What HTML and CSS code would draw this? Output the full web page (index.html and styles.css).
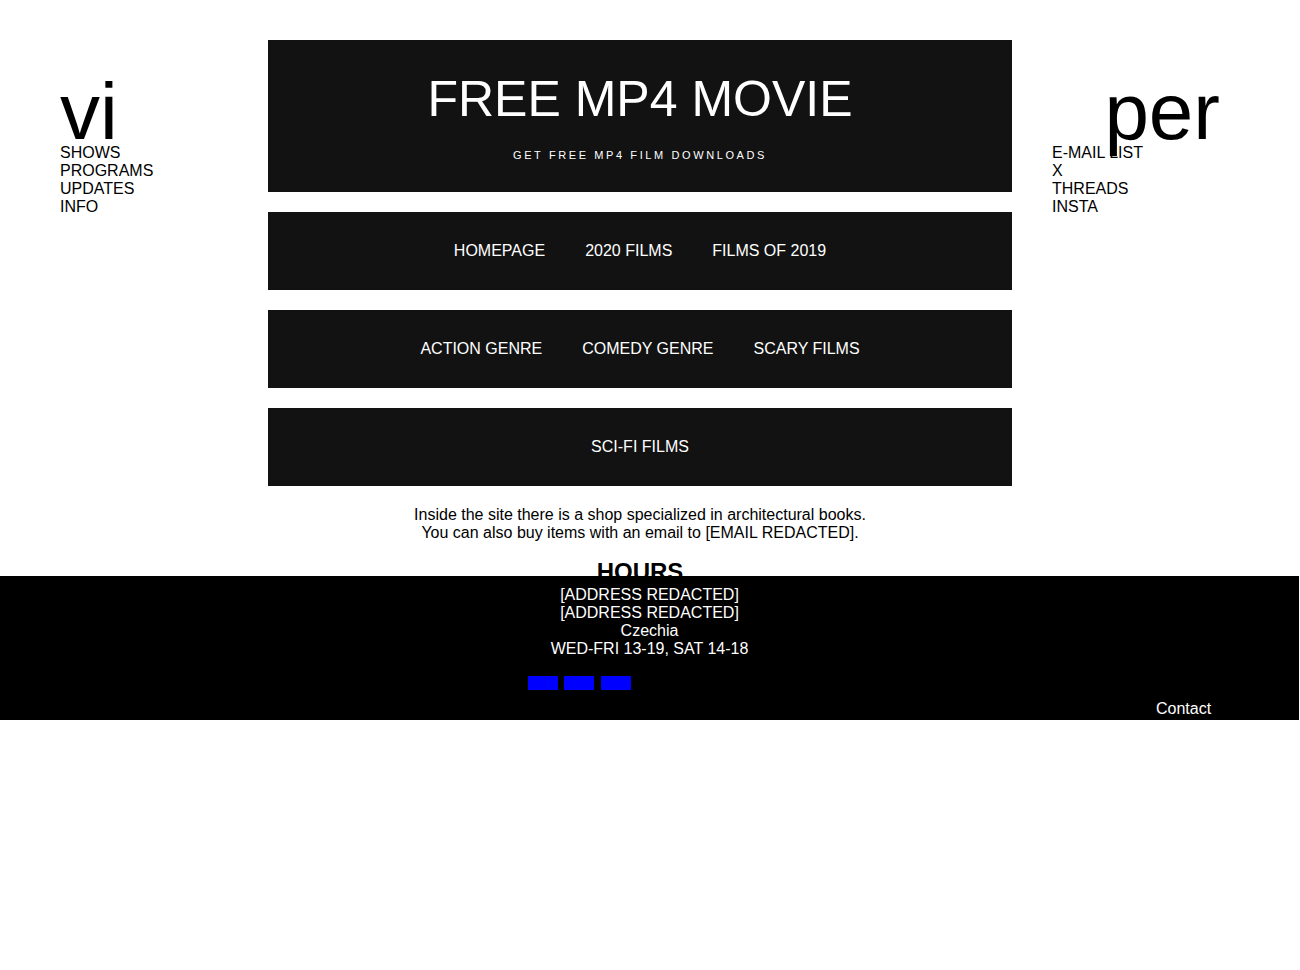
FILE: index.html
```html
<!DOCTYPE html>
<html lang="en">
<head>
<meta charset="utf-8">
<title>FREE MP4 MOVIE</title>
<link rel="stylesheet" href="styles.css">
</head>
<body>
<div class="page">
  <aside class="side side-left">
    <div class="logo">vi</div>
    <ul class="side-list">
      <li>SHOWS</li>
      <li>PROGRAMS</li>
      <li>UPDATES</li>
      <li>INFO</li>
    </ul>
  </aside>

  <main class="main">
    <header class="hero">
      <h1 class="hero-title">FREE MP4 MOVIE</h1>
      <p class="hero-sub">GET FREE MP4 FILM DOWNLOADS</p>
    </header>
    <nav class="navbox">
      <a>HOMEPAGE</a>
      <a>2020 FILMS</a>
      <a>FILMS OF 2019</a>
    </nav>
    <nav class="navbox">
      <a>ACTION GENRE</a>
      <a>COMEDY GENRE</a>
      <a>SCARY FILMS</a>
    </nav>
    <nav class="navbox">
      <a>SCI-FI FILMS</a>
    </nav>
    <p class="intro">Inside the site there is a shop specialized in architectural books.<br>You can also buy items with an email to [EMAIL REDACTED].</p>
    <h2 class="hours">HOURS</h2>
  </main>

  <aside class="side side-right">
    <div class="logo logo-right">per</div>
    <ul class="side-list">
      <li>E-MAIL LIST</li>
      <li>X</li>
      <li>THREADS</li>
      <li>INSTA</li>
    </ul>
  </aside>
</div>

<footer class="footer">
  <div class="address">
    [ADDRESS REDACTED]<br>
    [ADDRESS REDACTED]<br>
    Czechia<br>
    WED-FRI 13-19, SAT 14-18
  </div>
  <div class="socials">
    <span class="social"></span>
    <span class="social"></span>
    <span class="social"></span>
  </div>
  <div class="contact-row"><a class="contact">Contact</a></div>
</footer>
</body>
</html>
```

FILE: styles.css
```css
* { box-sizing: border-box; }

html, body {
  margin: 0;
  padding: 0;
  background: #fff;
}

body {
  font-family: "Liberation Sans", Arial, sans-serif;
  font-size: 16px;
  line-height: 18px;
  color: #000;
  position: relative;
  min-height: 970px;
}

.page {
  display: grid;
  grid-template-columns: 168px 744px 168px;
  column-gap: 40px;
  padding: 40px 0 0 60px;
  align-items: start;
}

.side {
  display: flex;
  flex-direction: column;
}

.logo {
  font-size: 80px;
  line-height: 64px;
  margin-top: 40px;
  position: relative;
  z-index: 0;
}

.logo-right {
  text-align: right;
}

.side-list {
  list-style: none;
  margin: 0;
  padding: 0;
  position: relative;
  z-index: 1;
}

.side-list li {
  line-height: 18px;
}

.main {
  display: flex;
  flex-direction: column;
}

.hero {
  background: #121212;
  color: #fff;
  text-align: center;
  padding: 34px 0 30px;
}

.hero-title {
  margin: 0;
  font-weight: normal;
  font-size: 50px;
  line-height: 50px;
}

.hero-sub {
  margin: 25px 0 0;
  font-size: 11px;
  line-height: 13px;
  letter-spacing: 2.6px;
}

.navbox {
  background: #121212;
  margin-top: 20px;
  padding: 30px 0;
  display: flex;
  justify-content: center;
  gap: 40px;
}

.navbox a {
  color: #fff;
  text-decoration: none;
  line-height: 18px;
}

.intro {
  margin: 20px 0 0;
  text-align: center;
}

.hours {
  margin: 16px 0 0;
  text-align: center;
  font-size: 24px;
  line-height: 28px;
  font-weight: bold;
}

.footer {
  position: absolute;
  top: 576px;
  left: 0;
  width: 1299px;
  height: 144px;
  background: #000;
  color: #fff;
  padding-top: 10px;
  display: flex;
  flex-direction: column;
}

.address {
  text-align: center;
}

.socials {
  display: flex;
  gap: 6px;
  margin: 18px 0 0 528px;
}

.social {
  width: 30px;
  height: 14px;
  background: #0000ff;
}

.social:last-child {
  margin-left: 1px;
}

.contact-row {
  margin: 10px 0 0 1156px;
}

.contact {
  color: #fff;
  text-decoration: none;
}
```
